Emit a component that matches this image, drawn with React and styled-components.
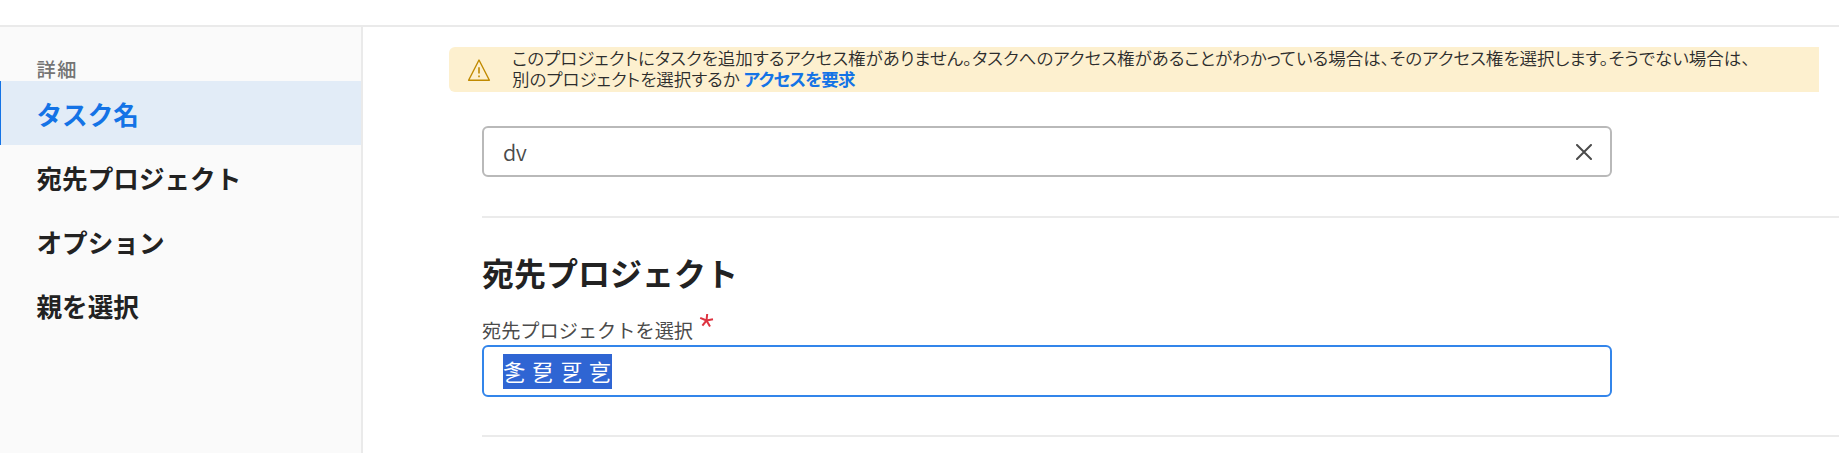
import React from 'react';
import styled, { createGlobalStyle } from 'styled-components';

const GlobalStyle = createGlobalStyle`
  * { box-sizing: border-box; }
  body {
    margin: 0;
    background: #fff;
    color: #222;
    font-family: "Noto Sans CJK JP", sans-serif;
    overflow: hidden;
  }
`;

const Page = styled.div`
  display: flex;
  flex-direction: column;
  height: 453px;
`;

const TopBar = styled.header`
  flex: none;
  height: 27px;
  border-bottom: 2px solid #eaeaea;
`;

const Body = styled.div`
  display: flex;
  flex: 1;
  min-height: 0;
`;

const Sidebar = styled.nav`
  flex: none;
  width: 363px;
  padding-top: 30px;
  background: #fafafa;
  border-right: 2px solid #eaeaea;
`;

const GroupLabel = styled.div`
  height: 24px;
  padding-left: 36.5px;
  font-size: 19.2px;
  font-weight: 500;
  letter-spacing: 1.6px;
  line-height: 25px;
  color: #747474;
`;

const NavItem = styled.a`
  display: flex;
  align-items: center;
  height: ${(p) => (p.$active ? 64 : 64.2)}px;
  padding: 2px 0 0 ${(p) => (p.$active ? 35.5 : 36.5)}px;
  border-left: ${(p) => (p.$active ? '1px solid #1473e6' : '0')};
  background: ${(p) => (p.$active ? '#e2ecf7' : 'transparent')};
  color: ${(p) => (p.$active ? '#1473e6' : '#222')};
  font-size: 25.6px;
  font-weight: 700;
  line-height: 36px;
`;

const Main = styled.main`
  flex: 1;
  min-width: 0;
  padding-top: 20px;
`;

const Banner = styled.div`
  display: flex;
  align-items: center;
  height: 45px;
  margin: 0 20px 0 86px;
  padding-left: 18px;
  border-radius: 6px 0 0 6px;
  background: #fdf0cf;
`;

const BannerText = styled.p`
  margin: 0 0 3px 21px;
  font-size: 17.5px;
  font-weight: 350;
  font-feature-settings: "palt";
  line-height: 21px;
  white-space: nowrap;
  color: #2c2c2c;
`;

const BannerLine = styled.span`
  display: block;
  letter-spacing: ${(p) => p.$tracking || 0}px;
`;

const BannerLink = styled.a`
  color: #1473e6;
  font-weight: 700;
  letter-spacing: -0.7px;
`;

const Section = styled.section`
  margin-left: 119px;
  padding-top: ${(p) => p.$top}px;
  padding-bottom: ${(p) => p.$bottom}px;
  border-bottom: 2px solid #ebebeb;
`;

const Field = styled.div`
  display: flex;
  align-items: center;
  justify-content: space-between;
  width: 1130px;
  height: ${(p) => (p.$focused ? 52 : 51)}px;
  padding: 0 18px 0 19px;
  border: 2px solid ${(p) => (p.$focused ? '#3385ea' : '#b9b9b9')};
  border-radius: 6px;
`;

const Value = styled.span`
  font-size: 21.6px;
  font-weight: 350;
  letter-spacing: -0.5px;
  line-height: 34px;
  color: #4b4b4b;
`;

const Selection = styled.span`
  height: 35px;
  font-size: 22.4px;
  letter-spacing: 0.6px;
  line-height: 34px;
  color: #fff;
  background: #2f65d3;
`;

const Title = styled.h2`
  margin: 0;
  font-size: 32px;
  font-weight: 700;
  line-height: 46px;
  color: #222;
`;

const Label = styled.label`
  display: flex;
  align-items: center;
  height: 30px;
  margin-top: 20px;
  font-size: 19.2px;
  line-height: 30px;
  color: #4b4b4b;
`;

const RequiredIcon = styled.svg`
  align-self: flex-start;
  margin: -2px 0 0 6px;
`;

export default function App() {
  return (
    <>
      <GlobalStyle />
      <Page lang="ja">
        <TopBar />
        <Body>
          <Sidebar>
            <GroupLabel>詳細</GroupLabel>
            <NavItem $active>タスク名</NavItem>
            <NavItem>宛先プロジェクト</NavItem>
            <NavItem>オプション</NavItem>
            <NavItem>親を選択</NavItem>
          </Sidebar>
          <Main>
            <Banner>
              <svg width="24" height="24" viewBox="0 0 24 24" fill="none" stroke="#c08a00" strokeWidth="1.4" strokeLinejoin="round">
                <path d="M12 2 L22.4 22.2 H1.6 Z" />
                <path d="M12 9.2 V15.6 M12 17.4 V19.2" strokeWidth="1.6" />
              </svg>
              <BannerText>
                <BannerLine $tracking={0.02}>
                  このプロジェクトにタスクを追加するアクセス権がありません。タスクへのアクセス権があることがわかっている場合は、そのアクセス権を選択します。そうでない場合は、
                </BannerLine>
                <BannerLine>
                  別のプロジェクトを選択するか <BannerLink>アクセスを要求</BannerLink>
                </BannerLine>
              </BannerText>
            </Banner>
            <Section $top={34} $bottom={39}>
              <Field>
                <Value>dv</Value>
                <svg width="16" height="16" viewBox="0 0 16 16" stroke="#4b4b4b" strokeWidth="2" strokeLinecap="round">
                  <path d="M1 1 L15 15 M15 1 L1 15" />
                </svg>
              </Field>
            </Section>
            <Section $top={31} $bottom={38}>
              <Title>宛先プロジェクト</Title>
              <Label>
                宛先プロジェクトを選択
                <RequiredIcon width="15" height="15" viewBox="0 0 15 15" stroke="#dd3340" strokeWidth="2">
                  <path d="M7.5 7.5 L8.2 1 M7.5 7.5 L14 6.2 M7.5 7.5 L11 13.4 M7.5 7.5 L3.4 12.6 M7.5 7.5 L1.2 4.8" />
                </RequiredIcon>
              </Label>
              <Field $focused>
                <Selection>{'\u3411 \u3412 \u3413 \u3414'}</Selection>
              </Field>
            </Section>
          </Main>
        </Body>
      </Page>
    </>
  );
}
